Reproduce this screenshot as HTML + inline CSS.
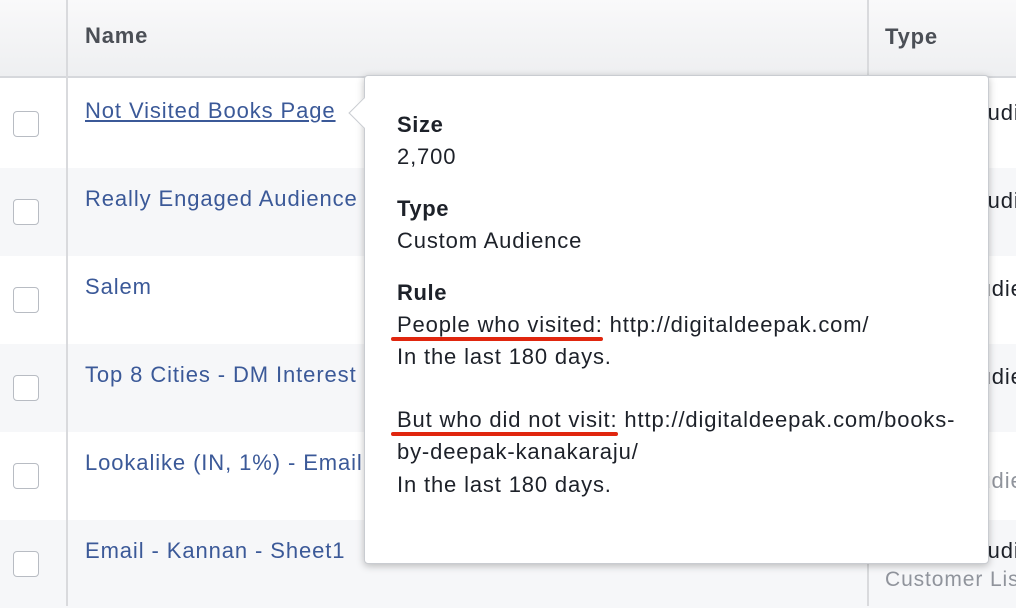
<!DOCTYPE html>
<html><head><style>
*{margin:0;padding:0;box-sizing:border-box}
body{width:1016px;height:606px;overflow:hidden;background:#fff;font-family:"Liberation Sans",Arial,sans-serif;position:relative}
.hdr{position:absolute;left:0;top:0;width:1016px;height:78px;background:linear-gradient(#f9f9fa,#eeeff1);border-bottom:2px solid #d6d8dc}
.vl{position:absolute;top:0;width:2px;height:606px;background:#d9dadd}
.row{position:absolute;left:0;width:1016px;height:88px}
.g{background:#f6f7f9}
.cb{position:absolute;left:13px;width:26px;height:26px;border:1px solid #b8bcc3;border-radius:4px;background:#fff}
.nm{position:absolute;left:85px;font-size:22px;letter-spacing:0.9px;color:#3b5998;white-space:nowrap}
.ty{position:absolute;left:885px;font-size:22px;letter-spacing:0.9px;color:#1d2129;white-space:nowrap}
.pop{position:absolute;left:364px;top:75px;width:625px;height:489px;background:#fff;border:1px solid #c9ccd1;border-radius:4px;box-shadow:0 2px 8px rgba(0,0,0,.25)}
.arr{position:absolute;left:353px;top:102px;width:22px;height:22px;background:#fff;border-left:1px solid #c9ccd1;border-bottom:1px solid #c9ccd1;transform:rotate(45deg)}
.t{position:absolute;left:397px;font-size:22px;letter-spacing:0.85px;color:#1d2129;white-space:nowrap}
.b{font-weight:bold;letter-spacing:0.6px}
.red{position:absolute;height:4px;background:#e0260e;border-radius:2px}
</style></head><body>
<div class="hdr"></div>
<div class="row" style="top:80px"></div>
<div class="row g" style="top:168px"></div>
<div class="row" style="top:256px"></div>
<div class="row g" style="top:344px"></div>
<div class="row" style="top:432px"></div>
<div class="row g" style="top:520px"></div>
<div class="vl" style="left:66px"></div>
<div class="vl" style="left:867px"></div>
<div style="position:absolute;left:85px;top:23px;font-size:22px;font-weight:bold;letter-spacing:0.8px;color:#4b4f56">Name</div>
<div style="position:absolute;left:885px;top:24px;font-size:22px;font-weight:bold;letter-spacing:0.8px;color:#4b4f56">Type</div>
<div class="cb" style="top:111px"></div>
<div class="cb" style="top:199px"></div>
<div class="cb" style="top:287px"></div>
<div class="cb" style="top:375px"></div>
<div class="cb" style="top:463px"></div>
<div class="cb" style="top:551px"></div>
<div class="nm" style="top:98px;text-decoration:underline">Not Visited Books Page</div>
<div class="nm" style="top:186px">Really Engaged Audience</div>
<div class="nm" style="top:274px">Salem</div>
<div class="nm" style="top:362px">Top 8 Cities - DM Interest</div>
<div class="nm" style="top:450px">Lookalike (IN, 1%) - Email</div>
<div class="nm" style="top:538px">Email - Kannan - Sheet1</div>
<div class="ty" style="top:100px">Custom Audi</div>
<div class="ty" style="top:188px">Custom Audi</div>
<div class="ty" style="top:276px;left:876px">Custom Audie</div>
<div class="ty" style="top:364px;left:876px">Custom Audie</div>
<div class="ty" style="top:468px;color:#90949c;left:856px">Lookalike Audie</div>
<div class="ty" style="top:538px">Custom Audi</div>
<div class="ty" style="top:568px;color:#90949c;font-size:21px">Customer List</div>
<div class="pop"></div>
<div class="arr"></div>
<div class="t b" style="top:112px">Size</div>
<div class="t" style="top:144px">2,700</div>
<div class="t b" style="top:196px">Type</div>
<div class="t" style="top:228px">Custom Audience</div>
<div class="t b" style="top:280px">Rule</div>
<div class="t" style="top:312px">People who visited: http://digitaldeepak.com/</div>
<div class="t" style="top:344px">In the last 180 days.</div>
<div class="t" style="top:407px">But who did not visit: http://digitaldeepak.com/books-</div>
<div class="t" style="top:439px">by-deepak-kanakaraju/</div>
<div class="t" style="top:472px">In the last 180 days.</div>
<div class="red" style="left:391px;top:337px;width:212px"></div>
<div class="red" style="left:391px;top:432px;width:227px"></div>
</body></html>
